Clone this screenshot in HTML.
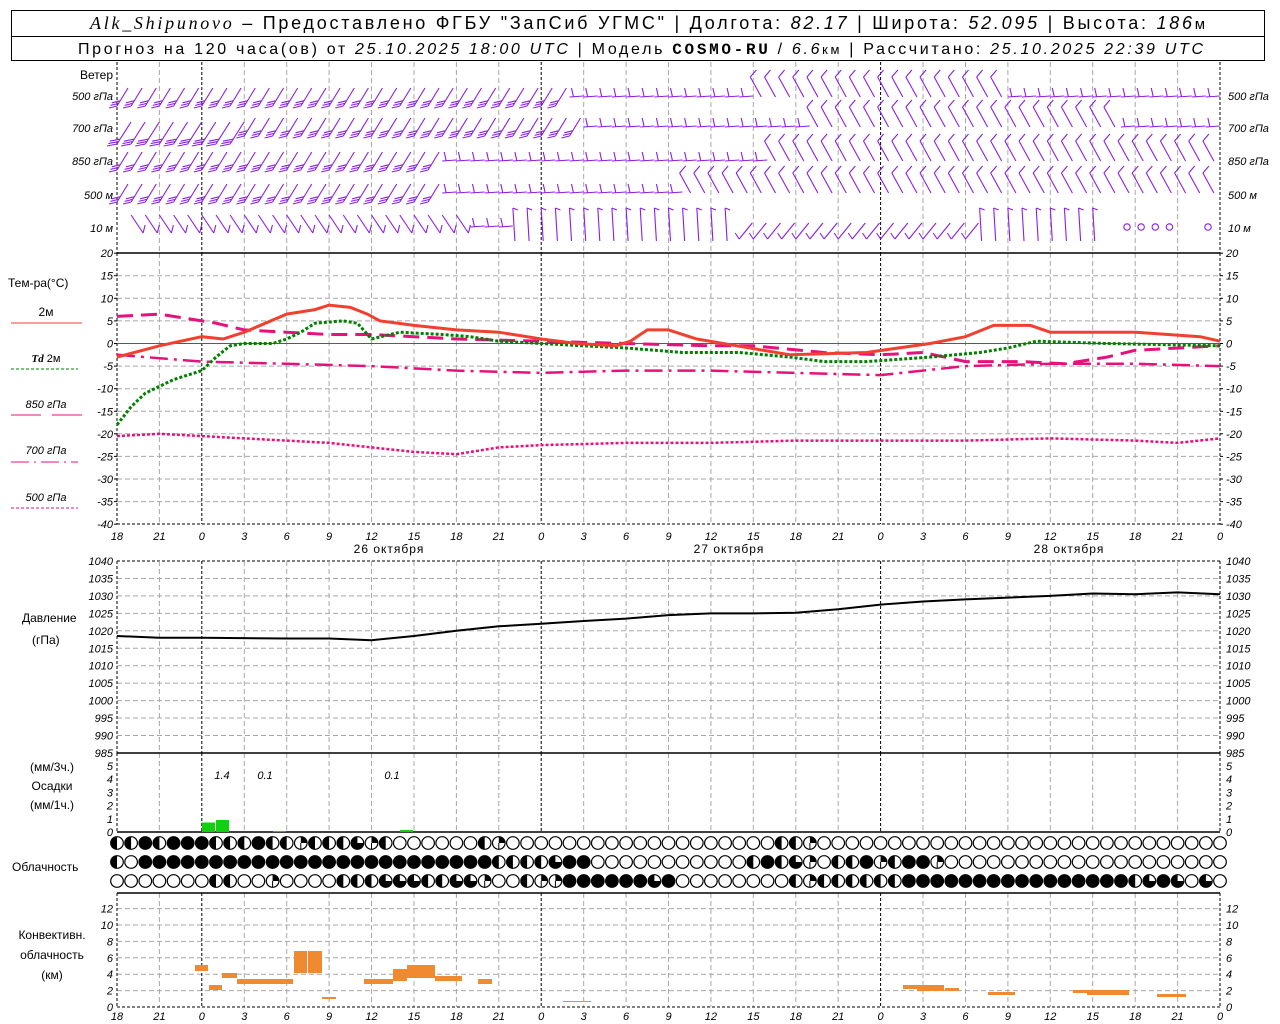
<!DOCTYPE html>
<html><head><meta charset="utf-8">
<style>
html,body{margin:0;padding:0;background:#fff;}
svg{display:block;font-family:"Liberation Sans","DejaVu Sans",sans-serif;}
.t{font-size:11px;font-style:italic;fill:#000}
.l{font-size:12px;fill:#000}
</style></head>
<body>
<svg id="s" width="1280" height="1024" viewBox="0 0 1280 1024" xmlns="http://www.w3.org/2000/svg">
<rect x="0" y="0" width="1280" height="1024" fill="#fff"/>
<rect x="11.5" y="10.5" width="1253" height="50" fill="none" stroke="#000"/>
<line x1="11" y1="36.5" x2="1265" y2="36.5" stroke="#000"/>
<text x="90" y="29" font-size="18" textLength="1115" lengthAdjust="spacing"><tspan font-family="Liberation Serif" font-style="italic">Alk_Shipunovo</tspan> – Предоставлено ФГБУ "ЗапСиб УГМС" | Долгота: <tspan font-style="italic">82.17</tspan> | Широта: <tspan font-style="italic">52.095</tspan> | Высота: <tspan font-style="italic">186</tspan><tspan font-size="15">м</tspan></text>
<text x="78" y="54" font-size="16" textLength="1125" lengthAdjust="spacing">Прогноз на 120 часа(ов) от <tspan font-style="italic">25.10.2025 18:00 UTC</tspan>  | Модель <tspan font-family="Liberation Mono" font-weight="bold">COSMO-RU</tspan> / <tspan font-style="italic">6.6</tspan><tspan font-size="13">км</tspan> | Рассчитано: <tspan font-style="italic">25.10.2025 22:39 UTC</tspan></text>

<text x="113" y="79" text-anchor="end" class="l">Ветер</text>
<g class="t" text-anchor="end">
<text x="113" y="100">500 гПа</text><text x="113" y="132">700 гПа</text><text x="113" y="165">850 гПа</text><text x="113" y="199">500 м</text><text x="113" y="232">10   м</text>
</g>
<g class="t">
<text x="1228" y="100">500 гПа</text><text x="1228" y="132">700 гПа</text><text x="1228" y="165">850 гПа</text><text x="1228" y="199">500 м</text><text x="1228" y="232">10   м</text>
</g>

<text x="8" y="287" class="l">Тем-ра(°С)</text>
<text x="46" y="316" class="l" font-size="11" text-anchor="middle">2м</text>
<line x1="11" y1="323" x2="82" y2="323" stroke="#f04030"/>
<text x="46" y="362" font-size="11" text-anchor="middle"><tspan font-style="italic" font-weight="bold" font-family="Liberation Serif">Td</tspan>  2м</text>
<line x1="11" y1="369" x2="78" y2="369" stroke="#008000" stroke-dasharray="3,2"/>
<text x="46" y="408" class="t" text-anchor="middle">850 гПа</text>
<line x1="11" y1="415" x2="41" y2="415" stroke="#e8107a"/><line x1="52" y1="415" x2="82" y2="415" stroke="#e8107a"/>
<text x="46" y="454" class="t" text-anchor="middle">700 гПа</text>
<line x1="11" y1="462" x2="78" y2="462" stroke="#e8107a" stroke-dasharray="18,5,2,5"/>
<text x="46" y="501" class="t" text-anchor="middle">500 гПа</text>
<line x1="11" y1="508" x2="78" y2="508" stroke="#e8107a" stroke-dasharray="3,2"/>

<text x="389" y="553" class="l" text-anchor="middle" letter-spacing="1">26 октября</text>
<text x="729" y="553" class="l" text-anchor="middle" letter-spacing="1">27 октября</text>
<text x="1069" y="553" class="l" text-anchor="middle" letter-spacing="1">28 октября</text>

<text x="22" y="622" class="l">Давление</text>
<text x="32" y="644" class="l">(гПа)</text>
<text x="52" y="771" class="l" text-anchor="middle">(мм/3ч.)</text>
<text x="52" y="790" class="l" text-anchor="middle">Осадки</text>
<text x="52" y="809" class="l" text-anchor="middle">(мм/1ч.)</text>
<text x="12" y="871" class="l">Облачность</text>
<text x="52" y="939" class="l" text-anchor="middle">Конвективн.</text>
<text x="52" y="959" class="l" text-anchor="middle">облачность</text>
<text x="52" y="979" class="l" text-anchor="middle">(км)</text>

<g id="g"></g>
</svg>
<script>
(function(){
var o=[];
var X0=117,X1=1220,HS=(X1-X0)/78;
function X(h){return X0+h*HS;}
function TY(v){return 343.5-v*4.517;}
function PY(p){return 561+(1040-p)*3.49;}
function L(x1,y1,x2,y2,st){o.push('<line x1="'+x1.toFixed(1)+'" y1="'+y1.toFixed(1)+'" x2="'+x2.toFixed(1)+'" y2="'+y2.toFixed(1)+'" '+st+'/>');}
var G='stroke="#a8a8a8" stroke-width="1" stroke-dasharray="5,3"';
var B='stroke="#000" stroke-width="1" stroke-dasharray="3,2"';
var S='stroke="#000" stroke-width="1.5"';
var panels=[[62,253],[253,524],[561,753],[753,832],[893,1007]];
for(var v=15;v>=-35;v-=5)L(X0,TY(v),X1,TY(v),G);
for(var p=1035;p>=990;p-=5)L(X0,PY(p),X1,PY(p),G);
L(X0,561,X1,561,B);
for(var k=2;k<=12;k+=2)L(X0,1007-k*8.2,X1,1007-k*8.2,G);
for(var i=0;i<=26;i++){var x=X0+i*HS*3;var day=(i==0||i==2||i==10||i==18||i==26);
 panels.forEach(function(pp){L(x,pp[0],x,pp[1],day?B:G);});}
L(X0,253,X1,253,S);L(X0,753,X1,753,S);L(X0,832,X1,832,S);L(X0,893,X1,893,S);
L(X0,524,X1,524,B);L(X0,1007,X1,1007,B);
L(X0,TY(0),X1,TY(0),'stroke="#3050ff" stroke-width="1"');
function tl(x,y,t,a){o.push('<text x="'+x+'" y="'+y+'" class="t" font-size="10" text-anchor="'+a+'">'+t+'</text>');}
for(var v=20;v>=-40;v-=5){tl(113,TY(v)+4,v,'end');tl(1226,TY(v)+4,v,'start');L(X0-3,TY(v),X0,TY(v),'stroke="#000"');L(X1,TY(v),X1+3,TY(v),'stroke="#000"');}
for(var p=1040;p>=985;p-=5){tl(113,PY(p)+4,p,'end');tl(1226,PY(p)+4,p,'start');}
for(var k=1;k<=5;k++){var y=832-k*13.2;tl(113,y+4,k,'end');tl(1226,y+4,k,'start');}
tl(113,836,0,'end');tl(1226,836,0,'start');
for(var k=0;k<=12;k+=2){var y=1007-k*8.2;tl(113,y+4,k,'end');tl(1226,y+4,k,'start');}
for(var i=0;i<=26;i++){var x=X0+i*HS*3,t=(18+3*i)%24;
 o.push('<text x="'+x+'" y="540" class="t" font-size="14" text-anchor="middle">'+t+'</text>');
 o.push('<text x="'+x+'" y="1020" class="t" font-size="14" text-anchor="middle">'+t+'</text>');}
function poly(pts,fy,st){var s=[];for(var j=0;j<pts.length;j+=2)s.push(X(pts[j]).toFixed(1)+','+fy(pts[j+1]).toFixed(1));
 o.push('<polyline fill="none" points="'+s.join(' ')+'" '+st+'/>');}
var PK='#e8107a';
poly([0,-20.5,3,-20,6,-20.5,9,-21,12,-21.5,15,-22,18,-23,21,-24,24,-24.5,27,-23,30,-22.5,36,-22,42,-22,48,-21.5,54,-21.5,60,-21.5,66,-21,72,-21.5,75,-22,78,-21],TY,'stroke="'+PK+'" stroke-width="2.5" stroke-dasharray="3,2"');
poly([0,-2.5,6,-4,12,-4.5,18,-5,24,-6,30,-6.5,36,-6,42,-6,48,-6.5,54,-7,57,-6,60,-5,66,-4.5,72,-4.5,78,-5],TY,'stroke="'+PK+'" stroke-width="2.5" stroke-dasharray="18,6,3,6"');
poly([0,6,3,6.5,6,5,7,4.5,9,3,12,2.5,15,2,18,2,21,1.5,24,1,30,0.5,36,0,42,-0.5,45,-0.5,50,-2,54,-2.5,57,-2,60,-4,64,-4,67,-4.5,70,-3,72,-1.5,78,-0.5],TY,'stroke="'+PK+'" stroke-width="3" stroke-dasharray="16,8"');
poly([0,-18,1,-14,2,-11,3,-9.5,4,-8,5,-7,6,-6,7,-3,8,-0.5,9,0,11,0,12,1,13,2.5,14,4.5,16,5,17,4.5,18,1,20,2.5,23,2,25,1.5,27,0.5,30,0,33,-0.5,36,-1,40,-2,44,-2,47.6,-3,50,-4,53,-4,57.5,-3,61,-2,63,-1,65,0.5,70,0,78,-0.5],TY,'stroke="#008000" stroke-width="3" stroke-dasharray="3,2"');
poly([0,-3,3,-0.5,6,1.5,7.5,1,9,2.5,12,6.5,14,7.5,15,8.5,16.5,8,17.7,6.5,18.6,5,21,4,24,3,27,2.5,30,1,32.5,0,35.3,-0.5,36.3,0.5,37.5,3,39,3,41,1,47.6,-2.5,53,-2,57.5,0,60,1.5,62,4,64.6,4,66,2.5,72,2.5,76.6,1.5,78,0.5],TY,'stroke="#f04030" stroke-width="3"');
poly([0,1018.5,3,1018,6,1018,12,1017.8,15,1017.8,18,1017.3,21,1018.5,24,1020,27,1021.3,30,1022,33,1022.8,36,1023.5,39,1024.5,42,1025,45,1025,48,1025.2,51,1026.2,54,1027.5,57,1028.4,60,1029,63,1029.5,66,1030,69,1030.7,72,1030.5,75,1031,78,1030.5],PY,'stroke="#000" stroke-width="2"');
function R(x1,y1,x2,y2,c){o.push('<rect x="'+x1+'" y="'+y1+'" width="'+(x2-x1)+'" height="'+(y2-y1)+'" fill="'+c+'"/>');}
R(202,822.5,215,832,'#10d010');R(216,820,229,832,'#10d010');R(273,831,286,832,'#10d010');R(400,830,413,832,'#10d010');
o.push('<text x="222" y="779" class="t" font-size="13" text-anchor="middle">1.4</text><text x="265" y="779" class="t" font-size="13" text-anchor="middle">0.1</text><text x="392" y="779" class="t" font-size="13" text-anchor="middle">0.1</text>');
var OR='#f08a30';
[[195,965,208,971],[209,985,222,990],[222,973,237,978],[237,979,293,984],[294,951,307,973],[308,951,322,973],[322,997,336,999],[364,979,393,984],[393,969,407,981],[407,965,435,978],[435,976,462,981],[478,979,492,984],[563,1001,591,1002],[903,985,944,989],[917,987,944,991],[945,988,959,991],[988,992,1015,995],[1073,990,1087,993],[1087,990,1129,995],[1157,994,1186,997]].forEach(function(r){R(r[0],r[1],r[2],r[3],OR);});
var rows=[
'hhFhFFFhhhFhhqhhhtqhEEEEEEhqEEEEEEEEEEEEEEEEEEEhhqEEEEEEEEEEEEEEEEEEEEEEEEEEEEE',
'hEFFFFFFFFFFFFFFFFFFFFFFFFFhhhhtFFEEEEEEEEEEEhFhtqEhhFqhFFqEEEEEEEEEEEEEEEEEEEE',
'EEEEEEEhhEEqEEEEhhhttthhttqEEhqqFFFFFFtFEEEEEEEEhqhhhhhhFFFFFFFFFFFFFFFFhtFtEtE'];
var ry=[843,862,881];
rows.forEach(function(r,ri){for(var j=0;j<79;j++){var c=r.charAt(j)||'E',x=X(j),y=ry[ri];
 o.push('<ellipse cx="'+x.toFixed(1)+'" cy="'+y+'" rx="6.3" ry="6.3" stroke="#000" stroke-width="1.2" fill="'+(c=='F'?'#000':'#fff')+'"/>');
 if(c=='h')o.push('<path d="M'+x.toFixed(1)+' '+(y-6.3)+' A6.3 6.3 0 0 0 '+x.toFixed(1)+' '+(y+6.3)+'Z" fill="#000"/>');
 if(c=='q')o.push('<path d="M'+x.toFixed(1)+' '+y+' L'+x.toFixed(1)+' '+(y-6.3)+' A6.3 6.3 0 0 1 '+(x+6.3).toFixed(1)+' '+y+'Z" fill="#000"/><line x1="'+x.toFixed(1)+'" y1="'+y+'" x2="'+x.toFixed(1)+'" y2="'+(y+6)+'" stroke="#000"/>');
 if(c=='t')o.push('<path d="M'+x.toFixed(1)+' '+y+' L'+(x+6.3).toFixed(1)+' '+y+' A6.3 6.3 0 1 1 '+x.toFixed(1)+' '+(y-6.3)+'Z" fill="#000"/>');
}});
var P='stroke="#8a1ee6" stroke-width="1.1" fill="none"';
function barb(t,x,y){
 if(t=='A'){L(x,y+9,x+11,y-9,P);for(var k=0;k<3;k++){var bx=x+k*1.4,by=y+9-k*2.6;L(bx,by,bx-8,by+2,P);}}
 else if(t=='W'){L(x,y+17,x+14,y-5,P);for(var k=0;k<3;k++){var bx=x+k*1.4,by=y+17-k*2.4;L(bx,by,bx-10,by+2,P);}}
 else if(t=='H'){L(x,y,x+14,y-1,P);L(x+4,y,x+2,y-9,P);}
 else if(t=='V'){L(x+8,y,x-3,y-20,P);L(x-3,y-20,x+3,y-27,P);}
 else if(t=='D'){L(x,y-12,x+12,y+6,P);L(x+12,y+6,x+14,y-2,P);}
 else if(t=='S'){L(x,y+12,x+13,y-4,P);L(x,y+12,x-4,y+6,P);}
 else if(t=='T'){L(x,y-19,x+2,y+14,P);L(x,y-19,x+5,y-17,P);}
 else if(t=='O'){o.push('<circle cx="'+x+'" cy="'+y+'" r="3.2" '+P+'/>');}
}
function lev(y,segs){segs.forEach(function(s){for(var j=s[1];j<=s[2];j++)barb(s[0],X(j),y);});}
lev(97,[['A',0,31],['H',32,44],['V',45,62],['H',63,77]]);
lev(127,[['W',0,8],['A',9,32],['H',33,48],['V',49,70],['H',71,77]]);
lev(161,[['A',0,22],['H',23,45],['V',46,77]]);
lev(193,[['A',0,22],['H',23,39],['V',40,77]]);
lev(227,[['D',1,24],['H',25,27],['T',28,43],['S',44,60],['T',61,69]]);
[71,72,73,74].forEach(function(j){barb('O',X(j)+6,227);});
barb('O',1208,227);
document.getElementById('g').innerHTML=o.join('');
})();
</script>
</body></html>
